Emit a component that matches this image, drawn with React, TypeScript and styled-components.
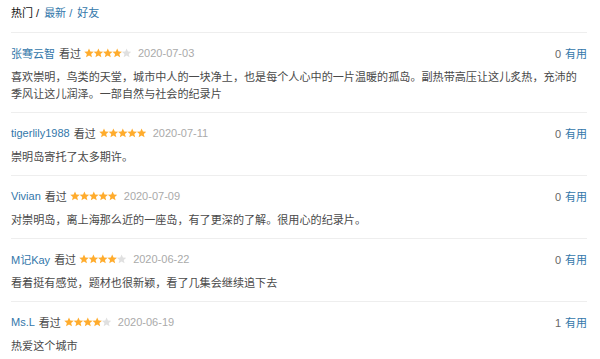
import React from "react";
import styled, { createGlobalStyle } from "styled-components";

const Global = createGlobalStyle`
  html, body { margin: 0; padding: 0; background: #fff; }
  body { font-family: "Liberation Sans", Arial, "Noto Sans CJK SC", sans-serif; }
`;

const Page = styled.div`
  width: 576px;
  padding: 0 13px 0 11px;
`;

const Tabs = styled.div`
  display: flex;
  align-items: center;
  height: 20px;
  padding: 2px 0 10px;
  border-bottom: 1px solid #eee;
  font-size: 11px;
  gap: 5px;
`;

const Tab = styled.span<{ $active?: boolean }>`
  color: ${(p) => (p.$active ? "#111" : "#37a")};
`;

const Item = styled.div`
  padding: 10px 0 10px;
  border-bottom: 1px solid #eee;
  &:first-of-type { padding-bottom: 9px; }
  &:last-child { border-bottom: none; }
`;

const Head = styled.div`
  display: flex;
  align-items: center;
  height: 20px;
  font-size: 11px;
`;

const Name = styled.span`
  color: #37a;
`;

const Watched = styled.span`
  color: #494949;
  margin-left: 4px;
`;

const Date = styled.span`
  color: #aaa;
  margin-left: 7px;
`;

const Votes = styled.span`
  margin-left: auto;
  color: #666;
`;

const Useful = styled.span`
  color: #37a;
  margin-left: 4px;
`;

const Content = styled.p`
  margin: 5px 0 0;
  max-width: 572px;
  font-size: 11.1px;
  line-height: 17px;
  color: #494949;
  font-family: "Noto Sans CJK SC", "Liberation Sans", sans-serif;
`;

const StarsWrap = styled.svg`
  margin-left: 3px;
  display: block;
`;

const STAR =
  "M5 0.4 L6.35 3.55 L9.75 3.8 L7.15 6 L7.95 9.35 L5 7.55 L2.05 9.35 L2.85 6 L0.25 3.8 L3.65 3.55 Z";

function Stars({ n }: { n: number }) {
  return (
    <StarsWrap width="47" height="10" viewBox="0 0 47 10">
      {[0, 1, 2, 3, 4].map((i) => (
        <path
          key={i}
          d={STAR}
          transform={`translate(${i * 9.4} 0)`}
          fill={i < n ? "#ffac2d" : "#e0e0e0"}
        />
      ))}
    </StarsWrap>
  );
}

const data = [
  { name: "张骞云智", stars: 4, date: "2020-07-03", votes: 0, text: "喜欢崇明，鸟类的天堂，城市中人的一块净土，也是每个人心中的一片温暖的孤岛。副热带高压让这儿炙热，充沛的季风让这儿润泽。一部自然与社会的纪录片" },
  { name: "tigerlily1988", stars: 5, date: "2020-07-11", votes: 0, text: "崇明岛寄托了太多期许。" },
  { name: "Vivian", stars: 5, date: "2020-07-09", votes: 0, text: "对崇明岛，离上海那么近的一座岛，有了更深的了解。很用心的纪录片。" },
  { name: "M记Kay", stars: 4, date: "2020-06-22", votes: 0, text: "看着挺有感觉，题材也很新颖，看了几集会继续追下去" },
  { name: "Ms.L", stars: 4, date: "2020-06-19", votes: 1, text: "热爱这个城市" },
];

export default function App() {
  return (
    <>
      <Global />
      <Page>
        <Tabs>
          <Tab $active>热门 /</Tab>
          <Tab>最新 /</Tab>
          <Tab>好友</Tab>
        </Tabs>
        {data.map((d) => (
          <Item key={d.name}>
            <Head>
              <Name>{d.name}</Name>
              <Watched>看过</Watched>
              <Stars n={d.stars} />
              <Date>{d.date}</Date>
              <Votes>
                {d.votes}
                <Useful>有用</Useful>
              </Votes>
            </Head>
            <Content>{d.text}</Content>
          </Item>
        ))}
      </Page>
    </>
  );
}
